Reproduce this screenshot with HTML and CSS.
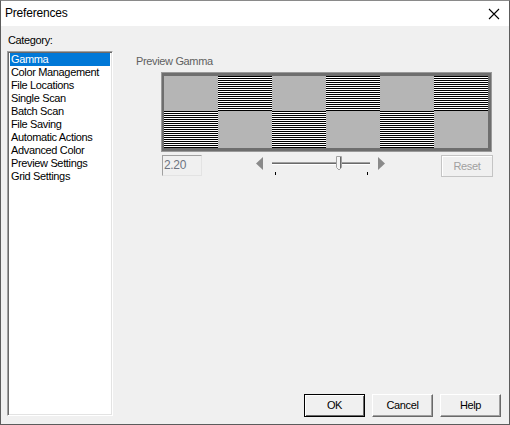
FILE: index.html
```html
<!DOCTYPE html>
<html>
<head>
<meta charset="utf-8">
<link rel="stylesheet" href="styles.css">
</head>
<body>
<div class="window">
  <div class="titlebar">
    <span class="title">Preferences</span>
    <svg class="close" width="12" height="12" viewBox="0 0 12 12"><path d="M1 1 L11 11 M11 1 L1 11" stroke="#000" stroke-width="1.1" fill="none"/></svg>
  </div>
  <div class="content">
    <div class="left">
      <div class="cat-label">Category:</div>
      <div class="listbox">
        <div class="item selected">Gamma</div>
        <div class="item">Color Management</div>
        <div class="item">File Locations</div>
        <div class="item">Single Scan</div>
        <div class="item">Batch Scan</div>
        <div class="item">File Saving</div>
        <div class="item">Automatic Actions</div>
        <div class="item">Advanced Color</div>
        <div class="item">Preview Settings</div>
        <div class="item">Grid Settings</div>
      </div>
    </div>
    <div class="right">
      <div class="group-label">Preview Gamma</div>
      <div class="gamma-area">
        <div class="gamma-frame">
          <div class="tile gray"></div><div class="tile lines"></div><div class="tile gray"></div><div class="tile lines"></div><div class="tile gray"></div><div class="tile lines"></div>
          <div class="tile lines"></div><div class="tile gray"></div><div class="tile lines"></div><div class="tile gray"></div><div class="tile lines"></div><div class="tile gray"></div>
        </div>
        <div class="controls">
          <div class="field">2.20</div>
          <svg class="slider" width="130" height="22" viewBox="0 0 130 22">
            <polygon points="0,8.5 7,2 7,15" fill="#8a8a8a"/>
            <rect x="16" y="7" width="98" height="1" fill="#a0a0a0"/>
            <rect x="16" y="8" width="98" height="1" fill="#6a6a6a"/>
            <rect x="16" y="9" width="98" height="1" fill="#ffffff"/>
            <rect x="19" y="17" width="1" height="3" fill="#000"/>
            <rect x="111" y="17" width="1" height="3" fill="#000"/>
            <polygon points="80.5,1.5 85.5,1.5 85.5,12.5 83,15 80.5,12.5" fill="#f4f4f4" stroke="#a0a0a0" stroke-width="1"/>
            <line x1="84.5" y1="2" x2="84.5" y2="13" stroke="#6a6a6a" stroke-width="1"/>
            <polygon points="122,2 129,8.5 122,15" fill="#8a8a8a"/>
          </svg>
          <div class="reset">Reset</div>
        </div>
      </div>
      <div class="buttons">
        <div class="btn default">OK</div>
        <div class="btn">Cancel</div>
        <div class="btn">Help</div>
      </div>
    </div>
  </div>
</div>
</body>
</html>
```
FILE: styles.css
```css
html, body {
  margin: 0;
  padding: 0;
  background: #f0f0f0;
}
.window {
  width: 510px;
  height: 425px;
  box-sizing: border-box;
  border: 1px solid #5c5c5c;
  border-top-color: #8a8a8a;
  background: #f0f0f0;
  display: flex;
  flex-direction: column;
  font-family: "Liberation Sans", Arial, sans-serif;
  font-size: 11px;
  letter-spacing: -0.35px;
  color: #000;
}
.titlebar {
  height: 25px;
  background: #fff;
  display: flex;
  align-items: center;
  justify-content: space-between;
  padding: 0 9px 0 4px;
  flex: none;
}
.title {
  font-family: "Liberation Sans", Arial, sans-serif;
  font-size: 12px;
  letter-spacing: -0.2px;
  line-height: 16px;
  margin-top: -1px;
}
.close {
  display: block;
}
.content {
  flex: 1;
  display: flex;
  min-height: 0;
}
.left {
  display: flex;
  flex-direction: column;
  padding: 8px 0 8px 6px;
  width: 106px;
}
.cat-label {
  line-height: 13px;
  padding-left: 1px;
  margin-bottom: 4px;
}
.listbox {
  flex: 1;
  background: #fff;
  border-style: solid;
  border-width: 1px;
  border-color: #a0a0a0 #ffffff #ffffff #a0a0a0;
  box-shadow: inset 1px 1px 0 #696969, inset -1px -1px 0 #e3e3e3;
  padding: 1px 2px;
}
.item {
  height: 13px;
  line-height: 13px;
  padding-left: 1px;
  white-space: nowrap;
}
.item.selected {
  background: #0078d7;
  color: #fff;
}
.right {
  flex: 1;
  display: flex;
  flex-direction: column;
  padding: 29px 8px 7px 23px;
}
.group-label {
  line-height: 13px;
  color: #606060;
}
.gamma-area {
  margin-left: 25px;
  margin-top: 4px;
  display: flex;
  flex-direction: column;
}
.gamma-frame {
  width: 324px;
  height: 72px;
  border-style: solid;
  border-width: 3px 3px 3px 2px;
  border-color: #6e6e6e;
  box-shadow: 0 0 0 1px #9a9a9a;
  margin: 1px;
  display: grid;
  grid-template-columns: repeat(6, 54px);
  grid-template-rows: 35px 37px;
}
.tile.gray {
  background: #b5b5b5;
}
.tile.lines {
  background: repeating-linear-gradient(to bottom, #000 0px, #000 1px, #fff 1px, #fff 2px);
}
.controls {
  display: flex;
  align-items: flex-start;
  margin-top: 3px;
  margin-left: 1px;
}
.field {
  width: 40px;
  height: 21px;
  box-sizing: border-box;
  border-style: solid;
  border-width: 1px;
  border-color: #a0a0a0 #e3e3e3 #e3e3e3 #a0a0a0;
  background: #f0f0f0;
  color: #6d7380;
  font-size: 12px;
  line-height: 19px;
  padding-left: 1px;
}
.slider {
  display: block;
  margin-left: 54px;
}
.reset {
  margin-left: 55px;
  width: 52px;
  height: 22px;
  box-sizing: border-box;
  border: 1px solid #c4c4c4;
  box-shadow: inset 1px 1px 0 #ffffff;
  background: #f0f0f0;
  color: #a0a0a0;
  text-align: center;
  line-height: 20px;
}
.buttons {
  margin-top: auto;
  display: flex;
  justify-content: flex-end;
  gap: 7px;
}
.btn {
  width: 61px;
  height: 23px;
  box-sizing: border-box;
  border-style: solid;
  border-width: 1px;
  border-color: #ffffff #696969 #696969 #ffffff;
  box-shadow: inset -1px -1px 0 #a0a0a0;
  background: #f0f0f0;
  text-align: center;
  line-height: 21px;
}
.btn.default {
  border-color: #000;
  box-shadow: inset 1px 1px 0 #fff, inset -1px -1px 0 #696969;
}
```
